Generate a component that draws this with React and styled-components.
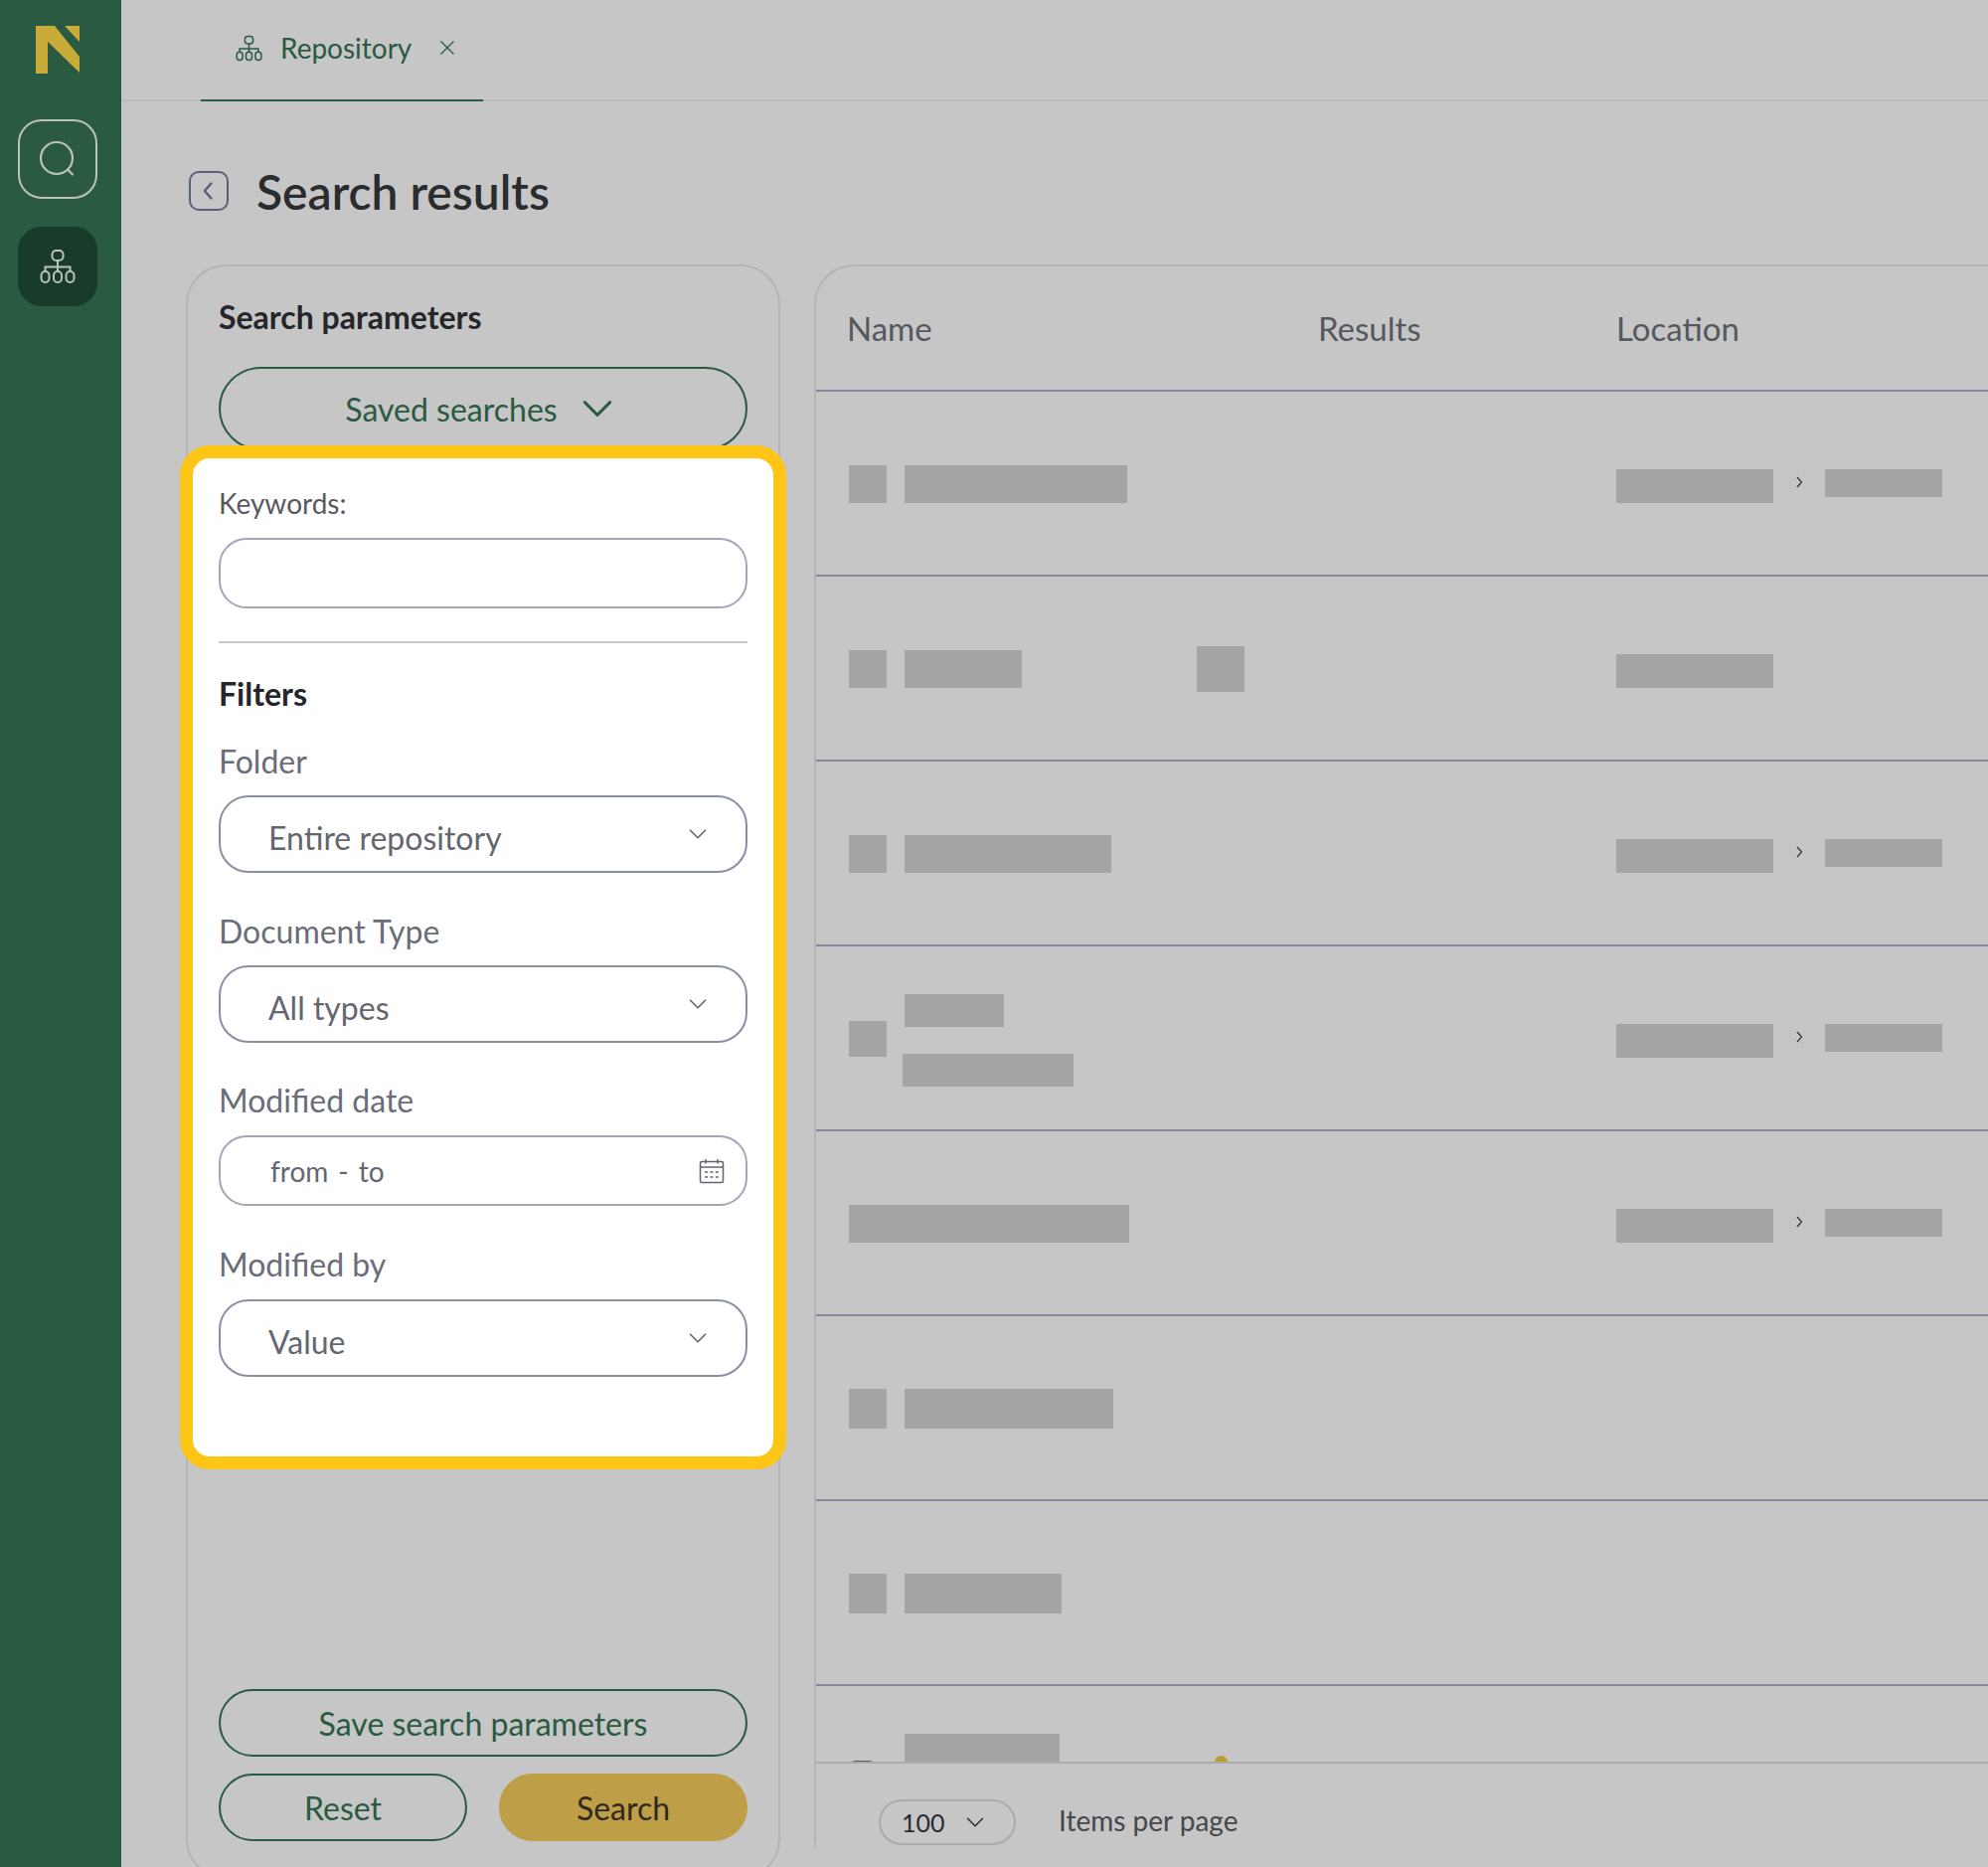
import React from "react";
import styled, { createGlobalStyle } from "styled-components";

const GlobalStyle = createGlobalStyle`
  html, body {
    margin: 0;
    padding: 0;
    background: #c6c6c6;
    overflow: hidden;
  }
  * {
    box-sizing: border-box;
  }
`;

const Page = styled.div`
  display: flex;
  width: 2000px;
  height: 1878px;
  overflow: hidden;
  background: #c6c6c6;
  font-family: "Lato", "Liberation Sans", sans-serif;
`;

const Sidebar = styled.nav`
  flex: 0 0 122px;
  display: flex;
  flex-direction: column;
  align-items: center;
  padding: 26px 6px 0 0;
  background: #2a5a41;
`;

const Logo = styled.svg`
  width: 44px;
  height: 48px;
  margin-bottom: 46px;
`;

const NavButton = styled.button`
  display: flex;
  align-items: center;
  justify-content: center;
  width: 80px;
  height: 80px;
  margin-bottom: 28px;
  padding: 0;
  border-radius: 24px;
  border: ${(p) => (p.$active ? "none" : "2px solid #bcc2b9")};
  background: ${(p) => (p.$active ? "#183b2a" : "transparent")};
  color: #bcc2b9;
`;

const Main = styled.main`
  flex: 1;
  min-width: 0;
  display: flex;
  flex-direction: column;
`;

const TabBar = styled.div`
  flex: 0 0 102px;
  padding-left: 80px;
  border-bottom: 2px solid #bababa;
`;

const Tab = styled.div`
  display: flex;
  align-items: center;
  width: 284px;
  height: 102px;
  margin-bottom: -2px;
  padding: 0 0 4px 35px;
  border-bottom: 2px solid #2a5a41;
  color: #2a5a41;
  font-size: 28px;
`;

const TabLabel = styled.span`
  margin: 0 28px 0 18px;
`;

const TitleRow = styled.div`
  flex: 0 0 164px;
  display: flex;
  align-items: center;
  gap: 28px;
  padding: 16px 0 0 68px;
`;

const BackButton = styled.button`
  display: flex;
  align-items: center;
  justify-content: center;
  width: 40px;
  height: 40px;
  padding: 0;
  border: 2px solid #5c5f78;
  border-radius: 10px;
  background: transparent;
  color: #5c5f78;
`;

const Title = styled.h1`
  margin: 0;
  color: #2b2c2f;
  font-size: 48px;
  font-weight: 600;
`;

const Content = styled.div`
  flex: none;
  display: flex;
  gap: 34px;
  height: 1624px;
  padding-left: 65px;
`;

const Panel = styled.aside`
  position: relative;
  flex: 0 0 598px;
  display: flex;
  flex-direction: column;
  padding: 31px 31px 36px;
  border: 2px solid #b4b4b4;
  border-radius: 40px;
`;

const PanelTitle = styled.h2`
  margin: 0;
  color: #25262a;
  font-size: 32px;
  line-height: 40px;
  font-weight: 700;
`;

const PillButton = styled.button`
  display: flex;
  align-items: center;
  justify-content: center;
  gap: 23px;
  width: 100%;
  height: ${(p) => p.$height || 68}px;
  padding: 0 ${(p) => p.$shift || 0}px 0 0;
  border: 2px solid ${(p) => (p.$primary ? "#bf9e48" : "#2a5a41")};
  border-radius: 42px;
  background: ${(p) => (p.$primary ? "#bf9e48" : "transparent")};
  color: ${(p) => (p.$primary ? "#2e2a1e" : "#2a5a41")};
  font-family: inherit;
  font-size: 32px;
`;

const SavedSearches = styled.div`
  margin-top: 30px;
`;

const PanelActions = styled.div`
  display: grid;
  grid-template-columns: 1fr 1fr;
  gap: 17px 32px;
  margin-top: auto;

  & > :first-child {
    grid-column: 1 / -1;
  }
`;

const Highlight = styled.section`
  position: absolute;
  top: 180px;
  left: -8px;
  width: 610px;
  height: 1030px;
  padding: 27px 26px 0;
  border: 13px solid #fdc516;
  border-radius: 30px;
  background: #ffffff;
`;

const KeywordLabel = styled.label`
  display: block;
  color: #58595f;
  font-size: 28px;
  line-height: 36px;
`;

const TextInput = styled.input`
  display: block;
  width: 100%;
  height: 71px;
  margin-top: 17px;
  border: 2px solid #a3a6b8;
  border-radius: 28px;
  background: #ffffff;
`;

const Divider = styled.hr`
  height: 2px;
  margin: 33px 0 0;
  border: none;
  background: #c8c8c8;
`;

const FiltersTitle = styled(PanelTitle)`
  margin: 31px 0 28px;
`;

const Field = styled.div`
  display: flex;
  flex-direction: column;
  gap: ${(p) => p.$gap || 14}px;
  margin-top: ${(p) => (p.$first ? 0 : p.$top || 39)}px;
`;

const FieldLabel = styled.span`
  color: #6a6d78;
  font-size: 32px;
  line-height: 40px;
`;

const SelectBox = styled.div`
  display: flex;
  align-items: center;
  justify-content: space-between;
  height: 78px;
  padding: 0 38px 0 48px;
  border: 2px solid #8b8fa6;
  border-radius: 30px;
  color: #64666f;
  font-size: 32px;
`;

const SelectValue = styled.span`
  padding-top: 7px;
`;

const DateBox = styled(SelectBox)`
  height: 71px;
  padding: 0 21px 0 50px;
  border-color: #a3a6b8;
  border-radius: 28px;
  font-size: 28px;
`;

const DateText = styled.span`
  display: flex;
  gap: 10px;
`;

const ResultsPanel = styled.section`
  flex: 0 0 1240px;
  display: flex;
  flex-direction: column;
  border: 2px solid #b4b4b4;
  border-radius: 40px 0 0 40px;
`;

const TableRowGrid = styled.div`
  display: grid;
  grid-template-columns: 472px 300px 1fr;
  align-items: center;
  padding-left: 33px;
`;

const TableHead = styled(TableRowGrid)`
  flex: 0 0 126px;
  grid-template-columns: 474px 300px 1fr;
  padding-left: 31px;
  border-bottom: 2px solid #858899;
  color: #55585f;
  font-size: 33px;
`;

const TableBody = styled.div`
  flex: 1;
  min-height: 0;
  overflow: hidden;
`;

const Row = styled(TableRowGrid)`
  height: 186px;
  border-bottom: 2px solid #858899;
`;

const NameCell = styled.div`
  display: flex;
  align-items: center;
  gap: 18px;
  padding-top: 2px;
`;

const Block = styled.div`
  flex: none;
  width: ${(p) => p.$w}px;
  height: ${(p) => p.$h || 38}px;
  margin-left: ${(p) => p.$offset || 0}px;
  background: #a5a5a5;
`;

const RowIcon = styled.div`
  flex: none;
  width: 21px;
  height: 36px;
  margin: 0 14px 0 3px;
  border-radius: 3px;
  background: #5a5c62;
`;

const NameStack = styled.div`
  display: flex;
  flex-direction: column;
  align-items: flex-start;
  gap: 27px;
  margin-top: 3px;

  & > :last-child {
    margin-left: -2px;
  }
`;

const StatusDot = styled.span`
  flex: none;
  align-self: flex-start;
  width: 13px;
  height: 13px;
  margin: 25px 0 0 124px;
  border-radius: 50%;
  background: #b8a030;
`;

const LocationCell = styled.div`
  grid-column: 3;
  display: flex;
  align-items: flex-start;
  padding-top: 6px;
`;

const Crumb = styled.div`
  flex: 0 0 52px;
  display: flex;
  justify-content: center;
  padding-top: 6px;
  color: #3a3c42;
`;

const Footer = styled.div`
  flex: 0 0 116px;
  display: flex;
  align-items: flex-start;
  gap: 43px;
  padding: 36px 0 0 63px;
  border-top: 2px solid #aaaaaa;
  margin-top: -1px;
  background: #c6c6c6;
  position: relative;
`;

const PageSize = styled.div`
  display: flex;
  align-items: center;
  gap: 20px;
  width: 138px;
  height: 46px;
  padding-left: 21px;
  border: 2px solid #aaaaaa;
  border-radius: 23px;
  color: #2b2c2f;
  font-size: 25px;
`;

const FooterLabel = styled.span`
  color: #46474c;
  font-size: 28px;
  line-height: 42px;
`;

const Chevron = ({ size = 24, stroke = 2 }) => (
  <svg width={size} height={size} viewBox="0 0 24 24" fill="none" stroke="currentColor" strokeWidth={stroke} strokeLinecap="round" strokeLinejoin="round">
    <path d="M3 7.5 12 16.5 21 7.5" />
  </svg>
);

const OrgIcon = ({ size = 36, color = "currentColor" }) => (
  <svg width={size} height={size} viewBox="0 0 36 36" fill="none" stroke={color} strokeWidth="2">
    <rect x="12.5" y="2" width="11" height="10" rx="4" />
    <path d="M18 12v11M5.5 23v-4.5h25V23" />
    <rect x="1.5" y="23" width="8" height="11" rx="4" />
    <rect x="14" y="23" width="8" height="11" rx="4" />
    <rect x="26.5" y="23" width="8" height="11" rx="4" />
  </svg>
);

const rows = [
  { icon: 38, names: [224], loc: true },
  { icon: 38, names: [118], tag: true, locShort: true },
  { icon: 38, names: [208], loc: true },
  { icon: 36, names: [100, 172], loc: true },
  { names: [], wide: 282, loc: true },
  { icon: 40, names: [210], h: 40 },
  { icon: 40, names: [158], h: 40 },
  { dash: true, names: [156, 172], dot: true },
];

const ResultRow = ({ row }) => (
  <Row>
    <NameCell>
      {row.wide && <Block $w={row.wide} />}
      {row.icon && <Block $w={38} $h={row.icon} />}
      {row.dash && <RowIcon />}
      {row.names.length === 1 && <Block $w={row.names[0]} $h={row.h} />}
      {row.names.length === 2 && (
        <NameStack>
          <Block $w={row.names[0]} $h={33} />
          <Block $w={row.names[1]} $h={33} />
        </NameStack>
      )}
      {row.tag && <Block $w={48} $h={46} $offset={158} />}
      {row.dot && <StatusDot />}
    </NameCell>
    {(row.loc || row.locShort) && (
      <LocationCell>
        <Block $w={158} $h={34} />
        {row.loc && (
          <>
            <Crumb>
              <svg width="10" height="14" viewBox="0 0 10 14" fill="none" stroke="currentColor" strokeWidth="1.4">
                <path d="M3 2 7.5 7 3 12" />
              </svg>
            </Crumb>
            <Block $w={118} $h={28} />
          </>
        )}
      </LocationCell>
    )}
  </Row>
);

const App = () => (
  <Page>
    <GlobalStyle />
    <Sidebar>
      <Logo viewBox="0 0 44 48">
        <path fill="#c8ac3a" d="M0 0H19L44 31V47L12 16V48H0Z" />
        <path fill="#c8ac3a" d="M29 0H44V16Z" />
      </Logo>
      <NavButton>
        <svg width="40" height="40" viewBox="0 0 40 40" fill="none" stroke="currentColor" strokeWidth="2.2" strokeLinecap="round">
          <circle cx="19" cy="19" r="16" />
          <path d="M30.5 31 35 35.5" />
        </svg>
      </NavButton>
      <NavButton $active>
        <OrgIcon />
      </NavButton>
    </Sidebar>

    <Main>
      <TabBar>
        <Tab>
          <OrgIcon size={27} />
          <TabLabel>Repository</TabLabel>
          <svg width="16" height="16" viewBox="0 0 16 16" fill="none" stroke="currentColor" strokeWidth="1.3">
            <path d="M1.5 1.5 14.5 14.5M14.5 1.5 1.5 14.5" />
          </svg>
        </Tab>
      </TabBar>

      <TitleRow>
        <BackButton>
          <svg width="22" height="22" viewBox="0 0 18 18" fill="none" stroke="currentColor" strokeWidth="2" strokeLinecap="round" strokeLinejoin="round">
            <path d="M11 3 5.5 9 11 15" />
          </svg>
        </BackButton>
        <Title>Search results</Title>
      </TitleRow>

      <Content>
        <Panel>
          <PanelTitle>Search parameters</PanelTitle>
          <SavedSearches>
            <PillButton $height={84} $shift={7}>
              Saved searches
              <Chevron size={34} />
            </PillButton>
          </SavedSearches>

          <Highlight>
            <KeywordLabel>Keywords:</KeywordLabel>
            <TextInput />
            <Divider />
            <FiltersTitle>Filters</FiltersTitle>
            <Field $first>
              <FieldLabel>Folder</FieldLabel>
              <SelectBox>
                <SelectValue>Entire repository</SelectValue>
                <Chevron size={20} />
              </SelectBox>
            </Field>
            <Field>
              <FieldLabel>Document Type</FieldLabel>
              <SelectBox>
                <SelectValue>All types</SelectValue>
                <Chevron size={20} />
              </SelectBox>
            </Field>
            <Field $gap={15} $top={38}>
              <FieldLabel>Modified date</FieldLabel>
              <DateBox>
                <DateText>
                  <span>from</span>
                  <span>-</span>
                  <span>to</span>
                </DateText>
                <svg width="26" height="26" viewBox="0 0 26 26" fill="none" stroke="currentColor" strokeWidth="1.5">
                  <rect x="1.5" y="3.5" width="23" height="21" rx="1.5" />
                  <path d="M1.5 9H24.5M7 1V5.5M19 1V5.5" />
                  <path strokeDasharray="3 2.4" d="M6 14H21M6 19H21" />
                </svg>
              </DateBox>
            </Field>
            <Field $gap={15}>
              <FieldLabel>Modified by</FieldLabel>
              <SelectBox>
                <SelectValue>Value</SelectValue>
                <Chevron size={20} />
              </SelectBox>
            </Field>
          </Highlight>

          <PanelActions>
            <PillButton>Save search parameters</PillButton>
            <PillButton>Reset</PillButton>
            <PillButton $primary>Search</PillButton>
          </PanelActions>
        </Panel>

        <ResultsPanel>
          <TableHead>
            <span>Name</span>
            <span>Results</span>
            <span>Location</span>
          </TableHead>
          <TableBody>
            {rows.map((row, i) => (
              <ResultRow key={i} row={row} />
            ))}
          </TableBody>
          <Footer>
            <PageSize>
              100
              <Chevron size={20} stroke={1.8} />
            </PageSize>
            <FooterLabel>Items per page</FooterLabel>
          </Footer>
        </ResultsPanel>
      </Content>
    </Main>
  </Page>
);

export default App;
